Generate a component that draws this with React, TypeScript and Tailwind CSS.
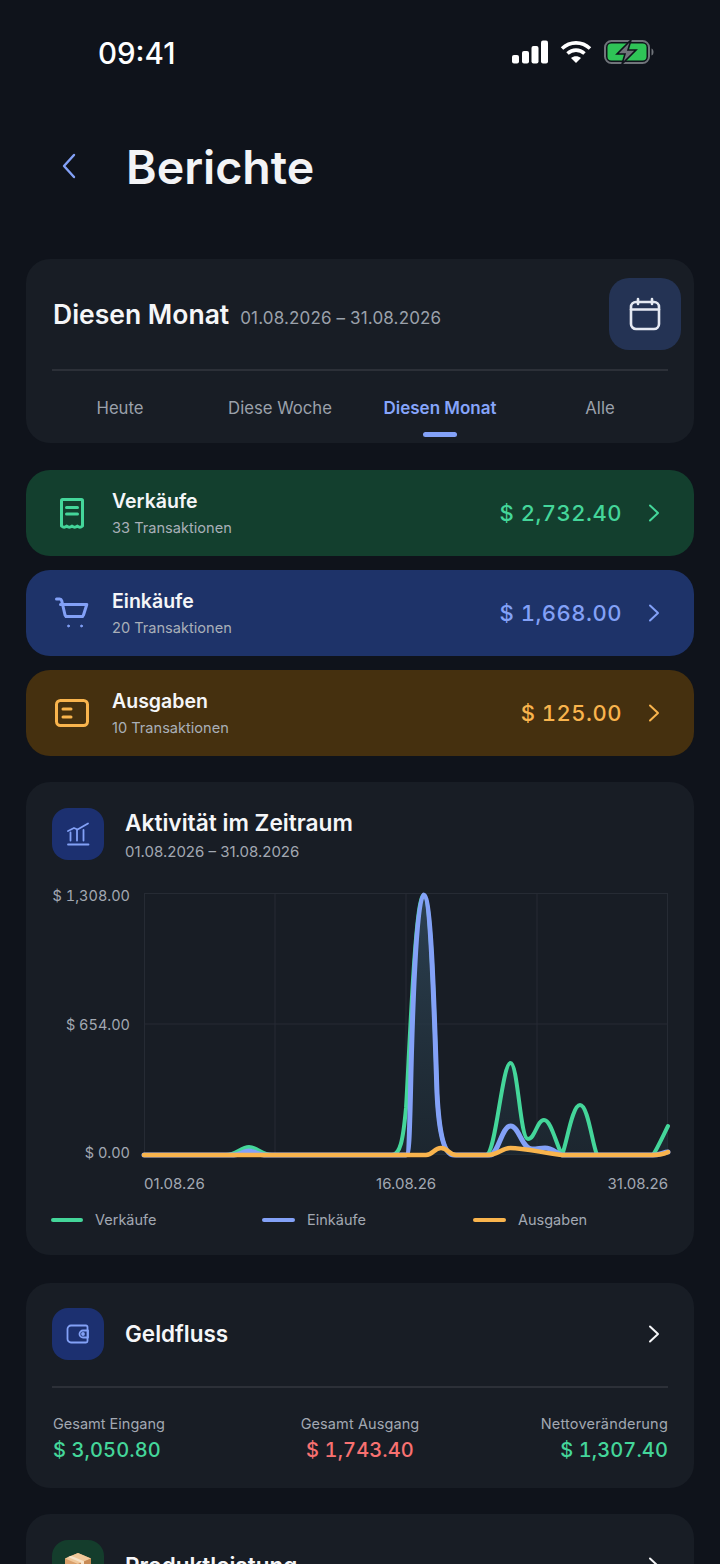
import React from "react";

const ChevronRight = ({ className }: { className: string }) => (
  <svg className={className} width="12" height="18" viewBox="0 0 12 18" fill="none" stroke="currentColor" strokeWidth="2" strokeLinecap="round" strokeLinejoin="round">
    <path d="M2 1.500 10 9l-8 7.500" />
  </svg>
);

const ReceiptIcon = () => (
  <svg width="26" height="32" viewBox="0 0 26 32" fill="none" stroke="currentColor" strokeWidth="3" strokeLinecap="round" strokeLinejoin="round">
    <path d="M2.500 29V3.500a1 1 0 0 1 1-1h19a1 1 0 0 1 1 1V29c-1.700 1.600-3.500 1.600-5.200 0-1.700 1.600-3.500 1.600-5.300 0-1.800 1.600-3.600 1.600-5.300 0-1.700 1.600-3.500 1.600-5.200 0Z" />
    <path d="M7.500 10.500h11M7.500 17h11" />
  </svg>
);

const CartIcon = () => (
  <svg width="34" height="32" viewBox="0 0 34 32" fill="none" stroke="currentColor" strokeWidth="3" strokeLinecap="round" strokeLinejoin="round">
    <path d="M1.500 2h3.200c1 0 1.700.6 2 1.600L10 18c.3 1 1.100 1.600 2.100 1.600h14.300c1 0 1.800-.6 2.100-1.600l3.300-10.500H5.500" />
    <circle cx="13.500" cy="29" r="1" fill="currentColor" strokeWidth="0.800" />
    <circle cx="26.500" cy="29" r="1" fill="currentColor" strokeWidth="0.800" />
  </svg>
);

const CardIcon = () => (
  <svg width="34" height="28" viewBox="0 0 34 28" fill="none" stroke="currentColor" strokeWidth="3" strokeLinecap="round" strokeLinejoin="round">
    <rect x="1.500" y="1.500" width="31" height="25" rx="4" />
    <path d="M8 10h8M8 18h8" />
  </svg>
);

const CalendarIcon = () => (
  <svg width="32" height="34" viewBox="0 0 32 34" fill="none" stroke="#e5e9f2" strokeWidth="2.600" strokeLinecap="round" strokeLinejoin="round">
    <rect x="2" y="5" width="28" height="27" rx="5" />
    <path d="M2 12.500h28M9 2v5M23 2v5" />
  </svg>
);

const ChartIcon = () => (
  <svg width="24" height="24" viewBox="0 0 24 24" fill="none" stroke="#83a1f7" strokeWidth="1.800" strokeLinecap="round" strokeLinejoin="round">
    <path d="M2 22.500h20.500M4.500 18.500v-8M11 18.500V8M17.500 18.500V8" />
    <path d="M2 9l6-3 3.500 1.500L22 1.500" />
  </svg>
);

const WalletIcon = () => (
  <svg width="24" height="20" viewBox="0 0 24 20" fill="none" stroke="#83a1f7" strokeWidth="1.800" strokeLinecap="round" strokeLinejoin="round">
    <path d="M20 1.500H5A3.500 3.500 0 0 0 1.500 5v10A3.500 3.500 0 0 0 5 18.500h15a1.500 1.500 0 0 0 1.500-1.500V3A1.500 1.500 0 0 0 20 1.500Z" />
    <path d="M22 6.500h-5a3.500 3.500 0 0 0 0 7h5Z" />
    <circle cx="17" cy="10" r="1" fill="#83a1f7" />
  </svg>
);

const BoxIcon = () => (
  <svg width="28" height="28" viewBox="0 0 28 28">
    <path d="M14 1 27 6.500v15L14 27 1 21.500v-15Z" fill="#d9a06b" />
    <path d="M14 1 27 6.500 14 12 1 6.500Z" fill="#f0c89a" />
    <path d="M14 12 27 6.500v15L14 27Z" fill="#c78a55" />
    <path d="M7 3.800 20 9.300v4l-3 1.200v-4L4 5Z" fill="#f7e3c8" />
  </svg>
);

const rows = [
  { title: "Verkäufe", sub: "33 Transaktionen", amount: "$ 2,732.40", bg: "bg-[#133f2e]", text: "text-[#44d69a]", icon: <ReceiptIcon /> },
  { title: "Einkäufe", sub: "20 Transaktionen", amount: "$ 1,668.00", bg: "bg-[#1e3369]", text: "text-[#83a1f7]", icon: <CartIcon /> },
  { title: "Ausgaben", sub: "10 Transaktionen", amount: "$ 125.00", bg: "bg-[#45300f]", text: "text-[#f9b44d]", icon: <CardIcon /> },
];

// chart coordinates: plot box is 524 x 262, baseline at y=262
const GREEN =
  "M0 262H82C92 262 97 254 105 254C113 254 118 262 128 262H248C256 262 259 248 262 215C265 170 271 2 279.500 2C287 2 290 110 293 200C295 240 300 262 310 262H342C352 262 358 170 366.500 170C374 170 376 246 384 246C391 246 393 227 400 227C407 227 411 248 418 262C423 250 428 212 436 212C444 212 448 250 453 262H509C513 256 519 243 524 233";
const BLUE =
  "M0 262H90C95 262 100 258 105 258C110 258 115 262 120 262H262C265 262 265.500 240 266.500 200C268 130 272 2 279.500 2C287 2 290 110 293 200C295 240 300 262 310 262H346C354 262 358 233 366.500 233C375 233 378 256 388 256C394 256 396 255 401 255C408 255 412 260 418 262H509C515 262 520 259 524 259";
const ORANGE =
  "M0 262H282C289 262 290 255 297 255C304 255 305 262 312 262H344C354 262 358 255 366.500 255C380 255 400 260 418 262H509C515 262 520 261 524 259";

const App = () => {
  return (
    <div className="w-[720px] h-[1564px] overflow-hidden bg-[#0f131b] font-[Inter,sans-serif] text-white">
      <div className="h-[106px] pl-[98px] pr-[66px] pt-[34px] flex justify-between items-start">
        <span className="text-[29.5px] leading-[38px] font-medium">09:41</span>
        <div className="flex items-center gap-[12px] pt-[6px] -ml-[1px] mr-[0.5px]">
          <svg width="36" height="24" viewBox="0 0 36 24" fill="#fff">
            <rect x="0" y="15" width="7" height="8.500" rx="2" />
            <rect x="10" y="11" width="7" height="12.500" rx="2" />
            <rect x="19.500" y="6" width="7" height="17.500" rx="2" />
            <rect x="29" y="0.500" width="7" height="23" rx="2" />
          </svg>
          <svg width="32" height="24" viewBox="0 0 32 24" fill="none" stroke="#fff" strokeWidth="3.600">
            <path d="M2 8.500C10 1 22 1 30 8.500" />
            <path d="M7.500 13.500c5-4.500 12-4.500 17 0" />
            <path d="M16 23l-5-5c3-2.500 7-2.500 10 0Z" fill="#fff" stroke="none" />
          </svg>
          <svg width="50" height="24" viewBox="0 0 50 24" fill="none">
            <rect x="1" y="1" width="44" height="22" rx="6.500" stroke="#70747a" strokeWidth="2" />
            <rect x="3.500" y="3.500" width="39" height="17" rx="4" fill="#2fc457" />
            <path d="M47.500 8.500c1.500.5 2 2 2 3.500s-.5 3-2 3.500Z" fill="#70747a" />
            <path d="M27 0 13 14h8l-3 10 14-14h-8Z" fill="#70747a" stroke="#0f131b" strokeWidth="1.600" />
          </svg>
        </div>
      </div>

      <div className="h-[153px] flex items-start pl-[62px] pt-[32px]">
        <svg className="mt-[15px] text-[#83a1f7]" width="14" height="26" viewBox="0 0 14 26" fill="none" stroke="currentColor" strokeWidth="2.400" strokeLinecap="round" strokeLinejoin="round">
          <path d="M12 2 2 13l10 11" />
        </svg>
        <h1 className="ml-[50px] text-[46.500px] leading-[58px] font-semibold text-[#f3f4f6]">Berichte</h1>
      </div>

      <div className="mx-[26px] flex flex-col">
        <section className="h-[184px] rounded-[24px] bg-[#181d25] pt-[19px] flex flex-col">
          <div className="h-[93px] mx-[26px] border-b-2 border-[#2c3038] flex items-start justify-between">
            <div className="flex items-baseline gap-[11px] pt-[19px] pl-[1px]">
              <span className="text-[26.500px] leading-[34px] font-semibold text-[#f5f6f8]">Diesen Monat</span>
              <span className="text-[17px] leading-[24px] text-[#9ba1ab] tracking-[0.15px]">01.08.2026 – 31.08.2026</span>
            </div>
            <div className="w-[72px] h-[72px] -mr-[13px] rounded-[20px] bg-[#243354] flex items-center justify-center">
              <CalendarIcon />
            </div>
          </div>
          <div className="mx-[14px] grid grid-cols-4 pt-[25px] text-[16.700px] leading-[24px] text-center text-[#9ba1ab]">
            <span>Heute</span>
            <span>Diese Woche</span>
            <span className="relative text-[17px] font-semibold text-[#86a5fb]">
              Diesen Monat
              <span className="absolute left-1/2 -translate-x-1/2 top-[36px] w-[34px] h-[5px] rounded-full bg-[#83a1f7]" />
            </span>
            <span>Alle</span>
          </div>
        </section>

        <div className="mt-[27px] flex flex-col gap-[14px]">
          {rows.map((r) => (
            <div key={r.title} className={`h-[86px] rounded-[24px] ${r.bg} flex items-center pl-[24px] pr-[34px]`}>
              <div className={`${r.text} w-[46px] h-[40px] flex items-center justify-center -ml-[1px]`}>{r.icon}</div>
              <div className="ml-[17px] flex-1">
                <div className="text-[19.500px] leading-[26px] font-semibold text-[#f5f6f8]">{r.title}</div>
                <div className="mt-[4px] text-[14.600px] leading-[20px] text-[#a9afb8]">{r.sub}</div>
              </div>
              <span className={`${r.text} text-[22px] leading-[28px] font-medium tracking-[0.5px] tabular-nums`}>{r.amount}</span>
              <ChevronRight className={`${r.text} ml-[26px]`} />
            </div>
          ))}
        </div>

        <section className="mt-[26px] h-[473px] rounded-[24px] bg-[#181d25] px-[26px] pt-[26px]">
          <div className="flex items-start gap-[21px]">
            <div className="w-[52px] h-[52px] rounded-[16px] bg-[#1c3070] flex items-center justify-center">
              <ChartIcon />
            </div>
            <div>
              <div className="text-[22.700px] leading-[30px] font-semibold text-[#f5f6f8]">Aktivität im Zeitraum</div>
              <div className="mt-[4px] text-[15px] leading-[20px] text-[#a2a8b2]">01.08.2026 – 31.08.2026</div>
            </div>
          </div>

          <div className="mt-[31px] flex">
            <div className="w-[78px] h-[277px] -mt-[7px] -mb-[8px] flex flex-col justify-between items-end whitespace-nowrap text-[14.500px] leading-[20px] tabular-nums text-[#a2a8b2]">
              <span>$ 1,308.00</span>
              <span>$ 654.00</span>
              <span>$ 0.00</span>
            </div>
            <svg className="ml-[14px] overflow-visible" width="524" height="262" viewBox="0 0 524 262" fill="none">
              <defs>
                <linearGradient id="area" x1="0" y1="0" x2="0" y2="1">
                  <stop offset="0" stopColor="#2d4354" stopOpacity="0.95" />
                  <stop offset="1" stopColor="#1f2c36" stopOpacity="0.6" />
                </linearGradient>
              </defs>
              <path d="M.5 0V262M131 0V262M262 0V262M393 0V262M523.500 0V262M0 .5H524M0 131H524M0 261.500H524" stroke="#262b34" strokeWidth="1" />
              <path d={`${GREEN}V262H0Z`} fill="url(#area)" />
              <path d={GREEN} stroke="#44d69a" strokeWidth="4" strokeLinecap="round" strokeLinejoin="round" />
              <path d={BLUE} stroke="#83a1f7" strokeWidth="5" strokeLinecap="round" strokeLinejoin="round" />
              <path d={ORANGE} stroke="#f9b44d" strokeWidth="4.500" strokeLinecap="round" strokeLinejoin="round" />
            </svg>
          </div>

          <div className="ml-[92px] mt-[19px] flex justify-between text-[15px] leading-[20px] text-[#a2a8b2]">
            <span>01.08.26</span>
            <span>16.08.26</span>
            <span>31.08.26</span>
          </div>

          <div className="mt-[16px] -ml-[1px] -mr-[16px] grid grid-cols-3 text-[14.500px] leading-[20px] text-[#a2a8b2]">
            <div className="flex items-center gap-[12px]">
              <span className="w-[32px] h-[4px] rounded-full bg-[#44d69a]" />
              Verkäufe
            </div>
            <div className="flex items-center gap-[12px]">
              <span className="w-[33px] h-[4px] rounded-full bg-[#83a1f7]" />
              Einkäufe
            </div>
            <div className="flex items-center gap-[12px]">
              <span className="w-[33px] h-[4px] rounded-full bg-[#f9b44d]" />
              Ausgaben
            </div>
          </div>
        </section>

        <section className="mt-[28px] h-[205px] rounded-[24px] bg-[#181d25] px-[26px] pt-[25px]">
          <div className="h-[80px] border-b-2 border-[#2c3038] flex items-start">
            <div className="w-[52px] h-[52px] rounded-[16px] bg-[#1c3070] flex items-center justify-center">
              <WalletIcon />
            </div>
            <span className="ml-[21px] flex-1 text-[22.500px] leading-[52px] font-semibold text-[#f5f6f8]">Geldfluss</span>
            <ChevronRight className="text-[#f5f6f8] mt-[17px] mr-[8px]" />
          </div>
          <div className="pt-[26px] grid grid-cols-3">
            <div className="pl-[1px]">
              <div className="text-[14.500px] leading-[20px] text-[#a2a8b2]">Gesamt Eingang</div>
              <div className="mt-[2px] text-[20px] leading-[28px] font-medium tracking-[0.1px] tabular-nums text-[#44d69a]">$ 3,050.80</div>
            </div>
            <div className="text-center">
              <div className="text-[14.500px] leading-[20px] tracking-[0.1px] text-[#a2a8b2]">Gesamt Ausgang</div>
              <div className="mt-[2px] text-[20px] leading-[28px] font-medium tracking-[0.1px] tabular-nums text-[#f87171]">$ 1,743.40</div>
            </div>
            <div className="text-right">
              <div className="text-[14.500px] leading-[20px] tracking-[0.2px] text-[#a2a8b2]">Nettoveränderung</div>
              <div className="mt-[2px] text-[20px] leading-[28px] font-medium tracking-[0.1px] tabular-nums text-[#44d69a]">$ 1,307.40</div>
            </div>
          </div>
        </section>

        <section className="mt-[26px] h-[205px] rounded-[24px] bg-[#181d25] px-[26px] pt-[26px]">
          <div className="flex items-start">
            <div className="w-[52px] h-[52px] rounded-[16px] bg-[#143d2c] flex items-center justify-center">
              <BoxIcon />
            </div>
            <span className="ml-[21px] flex-1 text-[22.500px] leading-[52px] font-semibold text-[#f5f6f8]">Produktleistung</span>
            <ChevronRight className="text-[#f5f6f8] mt-[17px] mr-[8px]" />
          </div>
        </section>
      </div>
    </div>
  );
};

export default App;
